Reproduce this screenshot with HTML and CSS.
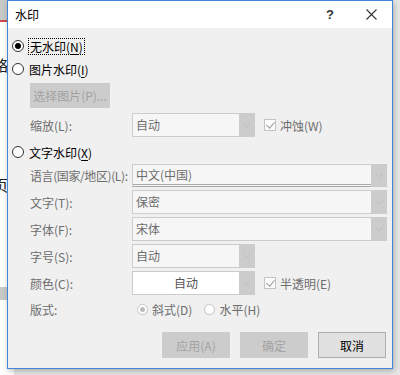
FILE: index.html
```html
<!DOCTYPE html>
<html lang="zh-CN">
<head>
  <meta charset="UTF-8">
  <title>水印</title>
  <link rel="stylesheet" href="styles.css">
</head>
<body>
  <div class="app">
    <div class="app-bar"></div>
    <div class="app-page">
      <p class="app-line line-1">略</p>
      <p class="app-line line-2">页</p>
    </div>
    <div class="app-status"></div>
  </div>

  <div class="dialog">
    <div class="titlebar">
      <span class="title">水印</span>
      <span class="help">?</span>
      <span class="close">
        <svg width="11" height="11" viewBox="0 0 11 11"><path d="M0.5 0.5 L10.5 10.5 M10.5 0.5 L0.5 10.5" stroke="#333" stroke-width="1.1" fill="none"/></svg>
      </span>
    </div>

    <div class="content">
      <div class="radio-row first">
        <span class="radio checked"></span>
        <span class="focus">无水印(<u>N</u>)</span>
      </div>
      <div class="radio-row second">
        <span class="radio"></span>
        <span>图片水印(<u>I</u>)</span>
      </div>
      <div class="pick-row">
        <button class="btn disabled pick">选择图片(P)...</button>
      </div>
      <div class="row scale-row">
        <span class="label">缩放(L):</span>
        <div class="select short">
          <span class="value">自动</span>
          <span class="arrow"><svg width="8" height="5" viewBox="0 0 8 5"><path d="M0.5 0.5 L4 4 L7.5 0.5" stroke="#bdbdbd" fill="none"/></svg></span>
        </div>
        <span class="check checked"></span>
        <span class="dim">冲蚀(W)</span>
      </div>

      <div class="radio-row third">
        <span class="radio"></span>
        <span>文字水印(<u>X</u>)</span>
      </div>

      <div class="fields">
        <div class="row">
          <span class="label narrow">语言(国家/地区)(L):</span>
          <div class="select long lang">
            <span class="value">中文(中国)</span>
            <span class="arrow"><svg width="8" height="5" viewBox="0 0 8 5"><path d="M0.5 0.5 L4 4 L7.5 0.5" stroke="#bdbdbd" fill="none"/></svg></span>
          </div>
        </div>
        <div class="row">
          <span class="label">文字(T):</span>
          <div class="select long">
            <span class="value">保密</span>
            <span class="arrow"><svg width="8" height="5" viewBox="0 0 8 5"><path d="M0.5 0.5 L4 4 L7.5 0.5" stroke="#bdbdbd" fill="none"/></svg></span>
          </div>
        </div>
        <div class="row">
          <span class="label">字体(F):</span>
          <div class="select long">
            <span class="value">宋体</span>
            <span class="arrow"><svg width="8" height="5" viewBox="0 0 8 5"><path d="M0.5 0.5 L4 4 L7.5 0.5" stroke="#bdbdbd" fill="none"/></svg></span>
          </div>
        </div>
        <div class="row">
          <span class="label">字号(S):</span>
          <div class="select short">
            <span class="value">自动</span>
            <span class="arrow"><svg width="8" height="5" viewBox="0 0 8 5"><path d="M0.5 0.5 L4 4 L7.5 0.5" stroke="#bdbdbd" fill="none"/></svg></span>
          </div>
        </div>
        <div class="row">
          <span class="label">颜色(C):</span>
          <div class="select short color">
            <span class="value center">自动</span>
            <span class="arrow"><svg width="8" height="5" viewBox="0 0 8 5"><path d="M0.5 0.5 L4 4 L7.5 0.5" stroke="#bdbdbd" fill="none"/></svg></span>
          </div>
          <span class="check checked"></span>
          <span class="dim">半透明(E)</span>
        </div>
      </div>

      <div class="row layout-row">
        <span class="label">版式:</span>
        <span class="radio small checked-dim"></span>
        <span class="dim opt">斜式(D)</span>
        <span class="radio small"></span>
        <span class="dim">水平(H)</span>
      </div>

      <div class="actions">
        <button class="btn disabled">应用(A)</button>
        <button class="btn disabled">确定</button>
        <button class="btn">取消</button>
      </div>
    </div>
  </div>
</body>
</html>
```

FILE: styles.css
```css
html, body {
  margin: 0;
  padding: 0;
}
body {
  width: 400px;
  height: 375px;
  background: #e6e6e6;
  font-family: "Noto Sans CJK SC", "Noto Sans", sans-serif;
  font-size: 12px;
  color: #000;
  position: relative;
  overflow: hidden;
}

/* document window behind the dialog */
.app {
  width: 14px;
  height: 375px;
  background: #fff;
}
.app-bar {
  height: 20px;
  background: #c9c9c9;
  border-bottom: 2px solid #d24a4a;
}
.app-page {
  height: 265px;
}
.app-line {
  margin: 0;
  font-size: 15px;
  line-height: 18px;
  padding-left: 0;
  text-indent: -7px;
  color: #222;
}
.line-1 {
  padding-top: 34px;
}
.line-2 {
  padding-top: 102px;
}
.app-status {
  height: 13px;
  background: #c9c9c9;
}

/* dialog */
.dialog {
  position: absolute;
  left: 7px;
  top: 0;
  width: 384px;
  height: 367px;
  background: #f0f0f0;
  border: 1px solid #3f86d8;
  box-shadow: 1px 2px 6px rgba(0, 0, 0, 0.25);
}
.titlebar {
  height: 27px;
  background: #fff;
  display: flex;
  align-items: center;
}
.title {
  margin-left: 7px;
  font-size: 12px;
}
.help {
  margin-left: auto;
  font-family: "Liberation Sans", sans-serif;
  font-weight: bold;
  font-size: 13px;
  color: #333;
}
.close {
  display: flex;
  margin-left: 32px;
  margin-right: 15px;
}

.content {
  padding: 0 5px 0 0;
}

.radio-row {
  display: flex;
  align-items: center;
  height: 18px;
  padding-left: 4px;
}
.radio-row.first {
  margin-top: 9px;
}
.radio-row.second {
  margin-top: 5px;
}
.radio-row.third {
  margin-top: 6px;
}
.radio {
  box-sizing: border-box;
  width: 12px;
  height: 12px;
  border: 1px solid #333;
  border-radius: 50%;
  background: #fff;
  margin-right: 5px;
  position: relative;
  flex: none;
}
.radio.checked::after {
  content: "";
  position: absolute;
  left: 2px;
  top: 2px;
  width: 6px;
  height: 6px;
  border-radius: 50%;
  background: #000;
}
.radio.small {
  width: 11px;
  height: 11px;
  border-color: #c4c4c4;
  margin-right: 4px;
}
.radio.checked-dim {
  margin-left: 5px;
}
.radio.checked-dim::after {
  content: "";
  position: absolute;
  left: 2px;
  top: 2px;
  width: 5px;
  height: 5px;
  border-radius: 50%;
  background: #bcbcbc;
}
.focus {
  outline: 1px dotted #000;
  padding: 0 1px;
  line-height: 15px;
}
u {
  text-decoration-thickness: 1px;
  text-underline-offset: 2px;
}

.pick-row {
  padding-left: 22px;
  margin-top: 5px;
}
.btn {
  font-family: inherit;
  font-size: 12px;
  box-sizing: border-box;
  height: 26px;
  width: 68px;
  background: #e1e1e1;
  border: 1px solid #adadad;
  color: #000;
  padding: 0;
}
.btn.disabled {
  background: #cccccc;
  border-color: #cccccc;
  color: #a2a2a2;
}
.btn.pick {
  width: 80px;
  height: 25px;
}

.row {
  display: flex;
  align-items: center;
  padding-left: 22px;
  height: 24px;
}
.scale-row {
  margin-top: 5px;
}
.label {
  width: 102px;
  flex: none;
  white-space: nowrap;
  color: #6d6d6d;
}
.label.narrow {
  letter-spacing: -0.4px;
}
.dim {
  color: #6d6d6d;
  white-space: nowrap;
}
.select {
  box-sizing: border-box;
  height: 24px;
  display: flex;
  align-items: stretch;
  border: 1px solid #cccccc;
  background: #f6f6f6;
  color: #6d6d6d;
}
.select.short {
  width: 123px;
}
.select.long {
  flex: 1;
}
.select.color {
  background: #fff;
}
.select.lang {
  height: 23px;
  border-bottom: 3px double #a9a9a9;
}
.value {
  flex: 1;
  padding-left: 3px;
  line-height: 21px;
}
.lang .value {
  line-height: 19px;
}
.value.center {
  text-align: center;
  padding-left: 0;
  color: #555;
}
.arrow {
  width: 15px;
  background: #cccccc;
  display: flex;
  align-items: center;
  justify-content: center;
}
.lang .arrow {
  margin-bottom: -3px;
}

.check {
  box-sizing: border-box;
  width: 12px;
  height: 12px;
  border: 1px solid #c4c4c4;
  background: #fbfbfb;
  margin-left: 9px;
  margin-right: 4px;
  position: relative;
  flex: none;
}
.check.checked::after {
  content: "";
  position: absolute;
  left: 3px;
  top: 0;
  width: 4px;
  height: 7px;
  border-right: 1px solid #9c9c9c;
  border-bottom: 1px solid #9c9c9c;
  transform: rotate(40deg);
}

.fields {
  display: flex;
  flex-direction: column;
  gap: 3px;
  margin-top: 2px;
}

.layout-row {
  height: 18px;
  margin-top: 5px;
}
.opt {
  margin-right: 12px;
}

.actions {
  display: flex;
  justify-content: flex-end;
  gap: 10px;
  margin-top: 14px;
  padding-right: 1px;
}
```
